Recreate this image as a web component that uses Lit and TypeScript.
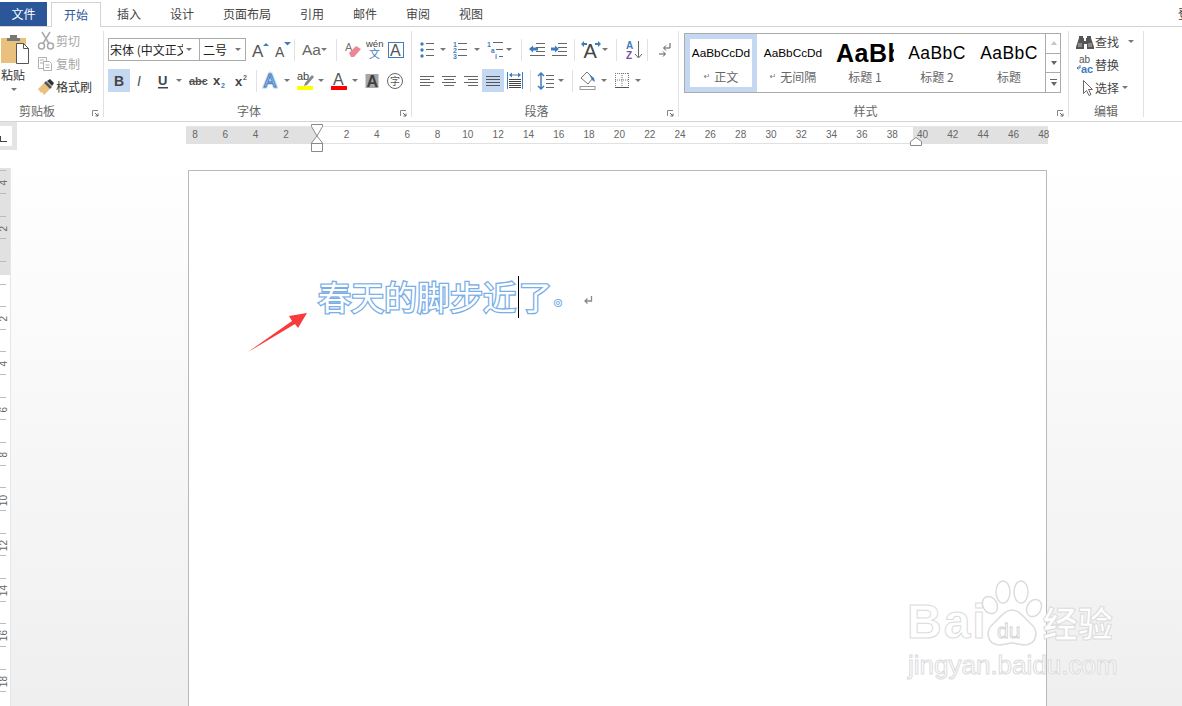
import { LitElement, html, css, svg } from "lit";
import { customElement } from "lit/decorators.js";

const G = "#666";
const BL = "#3f7cbf";
const ic = (c: unknown) => html`<svg width="22" height="22" viewBox="0 0 22 22">${c}</svg>`;
const ln = (rows: number[][], col = G) =>
  rows.map(([x1, y, x2]) => svg`<rect x=${x1} y=${y} width=${x2 - x1} height="1" fill=${col}/>`);
const T = (x: number, y: number, s: number, f: string, t: string, extra = "normal") =>
  svg`<text x=${x} y=${y} font-size=${s} fill=${f} font-weight=${extra}>${t}</text>`;

const icons: Record<string, unknown> = {
  grow: ic(svg`${T(4, 18, 17, "#555", "A")}<path d="M15 7l3-3 3 3z" fill=${BL}/>`),
  shrink: ic(svg`${T(4, 18, 14, "#555", "A")}<path d="M13 3h7l-3.500 3.500z" fill=${BL}/>`),
  aa: ic(svg`${T(3, 16, 15.500, "#666", "Aa")}`),
  eraser: ic(svg`${T(4, 12, 11, "#777", "A")}<path d="M8 14l7-7 5 3-7 8h-3z" fill="#ee8795"/>`),
  wen: ic(svg`${T(3, 8, 9.500, "#444", "wén")}${T(6, 19, 11, BL, "文")}`),
  boxA: ic(svg`<rect x="3.500" y="3.500" width="15" height="15" fill="#fff" stroke=${BL}/>${T(5, 17, 16, "#555", "A")}`),
  B: ic(svg`${T(6, 16, 14, "#444", "B", "bold")}`),
  I: ic(svg`<text x="7" y="16" font-size="14" fill="#555" font-style="italic" font-family="Liberation Serif">I</text>`),
  U: ic(svg`${T(6, 15, 13, "#444", "U", "bold")}<rect x="6" y="17" width="10" height="1.500" fill="#444"/>`),
  abc: ic(svg`${T(3, 15, 11, "#555", "abc", "bold")}<rect x="3" y="11" width="17" height="1" fill="#555"/>`),
  sub: ic(svg`${T(5, 15, 13, "#444", "x", "bold")}${T(13, 18, 7, BL, "2", "bold")}`),
  sup: ic(svg`${T(5, 16, 13, "#444", "x", "bold")}${T(13, 10, 7, "#666", "2", "bold")}`),
  fx: ic(svg`<text x="4" y="17" font-size="18" fill="#fff" stroke="#b9d4ef" stroke-width="3">A</text><text x="4" y="17" font-size="18" fill="#fff" stroke=${BL} stroke-width="1">A</text>`),
  hl: ic(svg`${T(3, 10, 11, "#444", "ab")}<path d="M11 13l7-8 2 2-7 8-3 1z" fill="#888"/><rect x="3" y="16" width="16" height="4" fill="#ff0"/>`),
  fc: ic(svg`${T(5, 15, 16, "#555", "A")}<rect x="3" y="16" width="16" height="4" fill="#f00"/>`),
  shA: ic(svg`<rect x="4.500" y="4" width="13" height="14" fill="#a6a6a6"/>${T(5.500, 17, 16, "#404040", "A", "bold")}`),
  zi: ic(svg`<circle cx="11" cy="11" r="7.500" fill="none" stroke="#666"/>${T(6, 15, 10, "#555", "字")}`),
  bul: ic(svg`<circle cx="6" cy="5" r="1.700" fill=${BL}/><circle cx="6" cy="11" r="1.700" fill=${BL}/><circle cx="6" cy="17" r="1.700" fill=${BL}/>${ln([[10, 4, 18], [10, 10, 18], [10, 16, 18]])}`),
  num: ic(svg`${T(4, 8, 7, BL, "1", "bold")}${T(4, 14, 7, BL, "2", "bold")}${T(4, 20, 7, BL, "3", "bold")}${ln([[9, 4, 18], [9, 10, 18], [9, 16, 18]])}`),
  multi: ic(svg`${T(3, 8, 7, BL, "1", "bold")}${T(7, 14, 6.500, BL, "a", "bold")}${T(11, 20, 7, BL, "i", "bold")}${ln([[9, 3, 19], [12, 10, 19], [15, 17, 19]])}`),
  out: ic(svg`${ln([[10, 4, 19], [10, 8, 19], [10, 12, 19], [4, 16, 19]])}<path d="M3 10l4-3.500v2h5v3h-5v2z" fill=${BL}/>`),
  ind: ic(svg`${ln([[10, 4, 19], [10, 8, 19], [10, 12, 19], [4, 16, 19]])}<path d="M11 10l-4-3.500v2h-4v3h4v2z" fill=${BL}/>`),
  cn: ic(svg`${T(3.500, 19, 20, "#444", "A")}<path d="M1 5l3-3v2h3v2h-3v2zM21 5l-3-3v2h-3v2h3v2z" fill=${BL}/>`),
  sort: ic(svg`${T(4, 10, 10, BL, "A", "bold")}${T(4, 20, 10, "#7a4fa3", "Z", "bold")}<path d="M16.500 2v16M13 15l3.500 4 3.500-4" fill="none" stroke="#666"/>`),
  show: ic(svg`<path d="M17 4v5h-6M13 6.500l-2.500 2.500 2.500 2.500" fill="none" stroke="#555"/><path d="M6 15h6M10 12.500l2.500 2.500-2.500 2.500" fill="none" stroke="#555"/>`),
  left: ic(svg`${ln([[4, 6, 18], [4, 9, 14], [4, 12, 18], [4, 15, 14]])}`),
  center: ic(svg`${ln([[4, 6, 18], [6, 9, 16], [4, 12, 18], [6, 15, 16]])}`),
  right: ic(svg`${ln([[4, 6, 18], [8, 9, 18], [4, 12, 18], [8, 15, 18]])}`),
  just: ic(svg`${ln([[4, 6, 18], [4, 9, 18], [4, 12, 18], [4, 15, 18]], "#555")}`),
  dist: ic(svg`<rect x="3" y="2" width="1" height="17" fill=${BL}/><rect x="18" y="2" width="1" height="17" fill=${BL}/><path d="M5 5l3-2.500v2h6v-2l3 2.500-3 2.500v-2h-6v2z" fill=${BL}/>${ln([[5, 9, 17], [5, 11, 17], [5, 13, 17], [5, 15, 17], [5, 17, 17]], "#444")}`),
  line: ic(svg`<path d="M6 3v16M3 6l3-3 3 3M3 16l3 3 3-3" fill="none" stroke=${BL} stroke-width="1.500"/>${ln([[11, 5, 19], [11, 9, 19], [11, 13, 19], [11, 17, 19]])}`),
  shade: ic(svg`<path d="M10 2l6 6-5 6-7-6z" fill="#fff" stroke="#777"/><path d="M12 4l5 4 1 4-3-2z" fill=${BL}/><rect x="3" y="16.500" width="15" height="3" fill="#fff" stroke="#999"/>`),
  border: ic(svg`<path d="M4.500 3v14M11 3v14M17.500 3v14M4 3.500h14M4 10h14" fill="none" stroke="#777" stroke-dasharray="1 1"/><rect x="4" y="17" width="14" height="1" fill="#555"/>`),
  launcher: html`<svg width="7" height="7" viewBox="0 0 7 7"><path d="M.5 6V.5H6" fill="none" stroke="#888"/><path d="M3 3l3 3M6 3.500V6H3.500" fill="none" stroke="#666"/></svg>`,
};

const paste = html`<svg width="30" height="34" viewBox="0 0 30 34"><path d="M1 6h25v25H1z" fill="#eac17c"/><path d="M7 6h13v3H7zM10 3h7v3h-7z" fill="#777"/><path d="M16.500 11.500h7l5 5v15h-12z" fill="#fff" stroke="#555"/><path d="M23.500 11.500v5h5" fill="none" stroke="#555"/></svg>`;
const cut = html`<svg width="18" height="20" viewBox="0 0 18 20"><g fill="none" stroke="#a9a9a9" stroke-width="1.500"><circle cx="4.500" cy="15" r="3"/><circle cx="13.500" cy="15" r="3"/><path d="M6 12.500L13 1M12 12.500L5 1"/></g></svg>`;
const copy = html`<svg width="18" height="18" viewBox="0 0 18 18"><g fill="#fff" stroke="#b0b0b0"><path d="M1.500 2.500h8v11h-8z"/><path d="M6.500 6.500h6l2 2v7h-8z"/></g><path d="M3 5h4M3 8h3M8.500 10h4M8.500 12.500h4" stroke="#b0b0b0"/></svg>`;
const brush = html`<svg width="18" height="18" viewBox="0 0 18 18"><path d="M1 11l6-6 6 6-6 6-2-3-1 1z" fill="#eac17c"/><path d="M7 5l2-2 6 6-2 2z" fill="#555"/><path d="M10 3l3-2 4 4-2 3z" fill="#333"/></svg>`;
const bino = html`<svg width="18" height="16" viewBox="0 0 18 16"><path d="M3 2h4v2h1v3h2V4h1V2h4v2l3 9v2h-7v-5H8v5H0v-2l3-9z" fill="#555"/><path d="M2 9h4v4H2zM12 9h4v4h-4z" fill="#888"/></svg>`;
const repl = html`<svg width="18" height="20" viewBox="0 0 18 20">${T(3, 8, 10, "#555", "ab")}${T(5, 18, 11, BL, "ac", "bold")}<path d="M4 10v3H1M2.500 11.500L1 13l1.500 1.500" fill="none" stroke=${BL}/></svg>`;
const cursor = html`<svg width="14" height="18" viewBox="0 0 14 18"><path d="M2.500 1.500v13l3-3 2.500 5 2-1-2.500-5h4z" fill="#fff" stroke="#666"/></svg>`;

const b = (k: string, c = "") => html`<span class="b ${c}">${icons[k]}</span>`;
const a = (c = "") => html`<span class="a ${c}"></span>`;
const sep = (c = "") => html`<span class="sep ${c}"></span>`;

const HNUMS = ["8", "6", "4", "2", "", ...Array.from({ length: 24 }, (_, i) => String((i + 1) * 2))];
const VNUMS = ["4", "2", "", "2", "4", "6", "8", "10", "12", "14", "16", "18"];

@customElement("app-root")
export class AppRoot extends LitElement {
  static styles = css`
    :host { display: block; width: 1182px; height: 706px; overflow: hidden; position: relative; background: #fff;
      font-family: "Noto Sans CJK SC", "Liberation Sans", sans-serif; font-size: 12px; color: #444; }
    svg text { font-family: "Liberation Sans", "Noto Sans CJK SC", sans-serif; }
    svg { display: block; flex: none; }
    .root { display: flex; flex-direction: column; height: 706px; }

    .tabs { display: flex; height: 27px; box-sizing: border-box; border-bottom: 1px solid #d4d4d4; padding-top: 2px; flex: none; }
    .tab { padding: 0 14.5px; line-height: 24px; white-space: nowrap; height: 24px; }
    .file { width: 47px; padding: 0; text-align: center; background: #2b579a; color: #fff; margin-right: 4px; }
    .on { padding: 0 12px; height: 25px; box-sizing: border-box; border: 1px solid #d4d4d4; border-bottom: 0; background: #fff; color: #2b579a; margin-right: 1.5px; line-height: 23px; }
    .login { margin-left: auto; margin-right: -8px; padding: 0; }

    .ribbon { display: flex; height: 95px; box-sizing: border-box; border-bottom: 1px solid #d4d4d4; padding-top: 4px; flex: none; }
    .g { box-sizing: border-box; height: 86px; border-right: 1px solid #e1e1e1; display: flex; flex-direction: column; flex: none; padding-top: 7px; }
    .g-clip { width: 104px; padding-top: 0; }
    .g-font { width: 308px; padding-left: 4px; }
    .g-para { width: 267px; padding-left: 4px; }
    .g-style { width: 390px; padding: 2px 0 0 5px; }
    .g-edit { width: 75px; padding: 0 0 0 7px; }
    .rows { display: flex; flex-direction: column; gap: 8px; }
    .row { display: flex; align-items: center; height: 23px; }
    .b { width: 22px; height: 23px; display: flex; align-items: center; justify-content: center; flex: none; }
    .sel { background: #c5d8f2; }
    .a { width: 10px; height: 23px; flex: none; display: flex; align-items: center; justify-content: center; }
    .a::after { content: ""; border: 3px solid transparent; border-top: 3px solid #777; border-bottom: 0; }
    .sep { width: 1px; height: 22px; background: #e1e1e1; flex: none; }
    .m1 { margin-left: 1px; } .m2 { margin-left: 2px; } .m3 { margin-left: 3px; } .m4 { margin-left: 4px; }
    .m5 { margin-left: 5px; } .m6 { margin-left: 6px; } .m7 { margin-left: 7px; } .n2 { margin-left: -2px; } .n1 { margin-left: -1px; }
    .combo { height: 23px; box-sizing: border-box; border: 1px solid #ababab; display: flex; align-items: center; flex: none; color: #222; overflow: hidden; }
    .c-font { width: 92px; }
    .c-size { width: 47px; margin-left: -1px; padding-left: 3px; }
    .combo .v { flex: 1; overflow: hidden; white-space: nowrap; min-width: 0; }
    .c-font .v { max-width: 73px; padding-left: 1px; }
    .combo .a { margin-right: 1px; width: 12px; }

    .lab { margin-top: auto; display: flex; height: 14px; line-height: 14px; margin-bottom: -1px; color: #666; flex: none; align-items: center; }
    .lab .t { flex: 1; text-align: center; }
    .lab .l { width: 16px; display: flex; justify-content: flex-end; padding-right: 4px; box-sizing: border-box; flex: none; margin-top: 4px; }
    .g-clip .lab .t { padding-right: 13px; }
    .g-font .lab .t, .g-para .lab .t { padding-right: 5px; }
    .g-style .lab { margin-left: -5px; }
    .g-edit .lab { margin-left: -7px; }

    .clip { display: flex; height: 72px; }
    .pcol { width: 37px; flex: none; display: flex; flex-direction: column; padding-top: 1px; }
    .pcol .p { line-height: 14px; margin: 2px 0 0 1px; color: #333; }
    .pcol .a { margin-left: 9px; height: 14px; }
    .ccol { display: flex; flex-direction: column; margin-top: -2px; }
    .ci { display: flex; align-items: center; height: 23px; gap: 1px; color: #333; white-space: nowrap; }
    .ci .i { width: 18px; height: 23px; display: flex; align-items: center; justify-content: center; flex: none; }
    .off { color: #a6a6a6; }

    .gal { display: flex; width: 377px; height: 60px; box-sizing: border-box; border: 1px solid #ababab; flex: none; }
    .cell { width: 72px; height: 58px; box-sizing: border-box; flex: none; display: flex; flex-direction: column; align-items: center; padding-top: 4px; }
    .cur { border: 5px solid #c5d8f2; padding-top: 0; }
    .smp { width: 60px; height: 30px; overflow: hidden; white-space: nowrap; color: #000; font-family: "Liberation Sans", sans-serif; display: flex; align-items: center; justify-content: center; flex: none; }
    .s1 { font-size: 11.800px; }
    .s2 { width: 58px; font-size: 25px; letter-spacing: .5px; font-weight: bold; justify-content: flex-start; }
    .s3 { font-size: 17.500px; letter-spacing: .4px; }
    .nm { line-height: 16px; margin-top: 1px; color: #666; white-space: nowrap; display: flex; align-items: center; gap: 4px; }
    .cur .nm { margin-top: 2px; }
    .ret { font-size: 8px; color: #777; font-family: "DejaVu Sans", sans-serif; }
    .cur .smp { height: 28px; }
    .scr { width: 15px; margin-left: auto; border-left: 1px solid #ababab; display: flex; flex-direction: column; flex: none; }
    .sb { flex: 1; display: flex; align-items: center; justify-content: center; flex-direction: column; gap: 2px; border-bottom: 1px solid #ababab; }
    .sb:last-child { border-bottom: 0; }
    .up { border: 3.500px solid transparent; border-bottom: 4px solid #c4c4c4; border-top: 0; }
    .dn { border: 3.500px solid transparent; border-top: 4px solid #666; border-bottom: 0; }
    .bar { width: 7px; height: 1px; background: #666; }

    .edit { display: flex; flex-direction: column; height: 69px; margin-top: -1px; flex: none; }
    .ei { display: flex; align-items: center; height: 23px; color: #444; white-space: nowrap; }
    .ei .i { width: 19px; display: flex; flex: none; }
    .ei .sh { padding-left: 5px; box-sizing: border-box; }
    .ei .x1 { margin-left: 7px; }
    .ei .x2 { margin-left: 1px; }

    .rl { height: 28px; flex: none; display: flex; background: #fff; }
    .corner { width: 17px; height: 28px; box-sizing: border-box; background: #fff; border: solid #e4e4e4; border-width: 4px 5px 4px 0; display: flex; align-items: flex-end; flex: none; padding-bottom: 4px; }
    .corner::before { content: ""; width: 7px; height: 6px; border: solid #444; border-width: 0 0 1px 1px; box-sizing: border-box; }
    .hr { position: relative; width: 862px; height: 18px; margin: 4px 0 0 169px; flex: none; box-sizing: border-box;
      background: linear-gradient(to right, #e1e1e1 132px, #fff 132px, #fff 727px, #e1e1e1 727px); border-bottom: 1px solid #e1e1e1; border-top: 1px solid #e6e6e6; }
    .hn { display: flex; margin-left: -6.150px; height: 16px; }
    .hn span { width: 30.320px; flex: none; text-align: center; font: 10px/16px "Liberation Sans", sans-serif; color: #666; }
    .mk { position: absolute; }
    .mk1 { left: 125px; top: -3px; }
    .mk2 { left: 724px; top: 10px; }

    .main { flex: 1; min-height: 0; display: flex; padding-top: 18px; overflow: hidden; background: linear-gradient(#fff 0%, #fdfdfd 15%, #efefef 100%); }
    .vr { width: 11px; flex: none; box-sizing: border-box; height: 540px; overflow: hidden; border-right: 1px solid #e6e6e6;
      background: repeating-linear-gradient(transparent 0 2.300px, #bbb 2.300px 3.300px, transparent 3.300px 22.650px) 0 0 / 6px 100% no-repeat,
        linear-gradient(#e1e1e1 107px, #fff 107px); }
    .vn { margin-top: -7.600px; display: flex; flex-direction: column; }
    .vn span { height: 45.300px; flex: none; display: flex; align-items: center; justify-content: center; width: 7px; }
    .vn b { font: 10px/10px "Liberation Sans", sans-serif; color: #666; writing-mode: vertical-rl; transform: rotate(180deg); }
    .page { position: relative; width: 859px; height: 560px; box-sizing: border-box; margin: 2px 0 0 177px; border: 1px solid #b9b9b9; background: #fff; padding: 105px 0 0 129px; flex: none; }
    .doc { display: flex; align-items: stretch; height: 42px; font-size: 33px; line-height: 42px; color: #fff; white-space: nowrap;
      -webkit-text-stroke: 2.700px #79aee6; paint-order: stroke fill; }
    .tx { margin-top: -1px; }
    .pd { width: 33px; flex: none; font-size: 20px; padding-left: 2px; box-sizing: border-box; -webkit-text-stroke: 2px #79aee6; }
    .caret { width: 1px; height: 42px; background: #000; margin: 0 0.500px 0 1.500px; flex: none; }
    .pil { margin: 20px 0 0 -2px; flex: none; }
    .arrow { position: absolute; left: 58px; top: 140px; }

    .wm { position: absolute; left: 900px; top: 575px; width: 225px; height: 112px; pointer-events: none; color: #fff; }
    .wm-top { display: flex; align-items: center; height: 75px; }
    .wm .bai { font: bold 48px/50px "Liberation Sans", sans-serif; letter-spacing: 2px; margin: 18px 0 0 7px; color: #fff; -webkit-text-stroke: 1px #dcdcdc; }
    .wm .jy { font: bold 35px/40px "Noto Sans CJK SC", sans-serif; color: #fff; -webkit-text-stroke: 1px #dcdcdc; margin: 18px 0 0 -5px; white-space: nowrap; }
    .wm .paw { margin: 0 0 0 -12px; }
    .wm .url { font: 26px/30px "Liberation Sans", sans-serif; color: #fff; -webkit-text-stroke: 1px #dcdcdc; margin: 0 0 0 8px; white-space: nowrap; }
  `;

  render() {
    const tabs = ["插入", "设计", "页面布局", "引用", "邮件", "审阅", "视图"];
    return html`<div class="root">
      <div class="tabs">
        <div class="tab file">文件</div>
        <div class="tab on">开始</div>
        ${tabs.map((t) => html`<div class="tab">${t}</div>`)}
        <div class="tab login">登</div>
      </div>

      <div class="ribbon">
        <div class="g g-clip">
          <div class="clip">
            <div class="pcol">${paste}<div class="p">粘贴</div>${a()}</div>
            <div class="ccol">
              <div class="ci off"><span class="i">${cut}</span>剪切</div>
              <div class="ci off"><span class="i">${copy}</span>复制</div>
              <div class="ci"><span class="i">${brush}</span>格式刷</div>
            </div>
          </div>
          <div class="lab"><span class="t">剪贴板</span><span class="l">${icons.launcher}</span></div>
        </div>

        <div class="g g-font">
          <div class="rows">
            <div class="row">
              <div class="combo c-font"><span class="v">宋体 (中文正文)</span>${a()}</div>
              <div class="combo c-size"><span class="v">二号</span>${a()}</div>
              ${b("grow", "m2")}${b("shrink", "m1")}${sep("m1")}${b("aa", "m4")}${a("n2")}${sep("m7")}
              ${b("eraser", "m4")}${b("wen")}${b("boxA")}
            </div>
            <div class="row">
              ${b("B", "sel")}${b("I")}${b("U")}${a()}${b("abc", "m2")}${b("sub")}${b("sup")}${sep("m4")}
              ${b("fx", "m3")}${a()}${b("hl", "m2")}${a()}${b("fc", "m2")}${a()}${b("shA", "m1")}${b("zi", "m1")}
            </div>
          </div>
          <div class="lab"><span class="t">字体</span><span class="l">${icons.launcher}</span></div>
        </div>

        <div class="g g-para">
          <div class="rows">
            <div class="row">
              ${b("bul")}${a()}${b("num", "m1")}${a("m1")}${b("multi", "m2")}${a("n2")}${sep("m7")}
              ${b("out", "m4")}${b("ind")}${sep("m4")}${b("cn", "m5")}${a("n2")}${sep("m6")}${b("sort", "m5")}${sep("m3")}${b("show", "m5")}
            </div>
            <div class="row">
              ${b("left")}${b("center")}${b("right")}${b("just", "sel")}${b("dist")}${sep("m4")}
              ${b("line", "m4")}${a("n1")}${sep("m6")}${b("shade", "m4")}${a()}${b("border", "m2")}${a()}
            </div>
          </div>
          <div class="lab"><span class="t">段落</span><span class="l">${icons.launcher}</span></div>
        </div>

        <div class="g g-style">
          <div class="gal">
            <div class="cell cur"><div class="smp s1">AaBbCcDd</div><div class="nm"><span class="ret">↵</span>正文</div></div>
            <div class="cell"><div class="smp s1">AaBbCcDd</div><div class="nm"><span class="ret">↵</span>无间隔</div></div>
            <div class="cell"><div class="smp s2">AaBb</div><div class="nm">标题 1</div></div>
            <div class="cell"><div class="smp s3">AaBbC</div><div class="nm">标题 2</div></div>
            <div class="cell"><div class="smp s3">AaBbC</div><div class="nm">标题</div></div>
            <div class="scr">
              <div class="sb"><span class="up"></span></div>
              <div class="sb"><span class="dn"></span></div>
              <div class="sb"><span class="bar"></span><span class="dn"></span></div>
            </div>
          </div>
          <div class="lab"><span class="t">样式</span><span class="l">${icons.launcher}</span></div>
        </div>

        <div class="g g-edit">
          <div class="edit">
            <div class="ei"><span class="i">${bino}</span>查找<span class="a x1"></span></div>
            <div class="ei"><span class="i">${repl}</span>替换</div>
            <div class="ei"><span class="i sh">${cursor}</span>选择<span class="a x2"></span></div>
          </div>
          <div class="lab"><span class="t">编辑</span></div>
        </div>
      </div>

      <div class="rl">
        <div class="corner"></div>
        <div class="hr">
          <div class="hn">${HNUMS.map((n) => html`<span>${n}</span>`)}</div>
          <svg class="mk mk1" width="12" height="29" viewBox="0 0 12 29"><path d="M.5.5h11v2L6 12 .5 2.500z" fill="#fff" stroke="#8a8a8a"/><path d="M6 12l5.500 7v8.500H.5V19z" fill="#fff" stroke="#8a8a8a"/><path d="M.5 19.500h11" stroke="#8a8a8a"/></svg>
          <svg class="mk mk2" width="12" height="9" viewBox="0 0 12 9"><path d="M.5 8.500V4.500L6 .5l5.500 4v4z" fill="#fff" stroke="#8a8a8a"/></svg>
        </div>
      </div>

      <div class="main">
        <div class="vr"><div class="vn">${VNUMS.map((n) => html`<span><b>${n}</b></span>`)}</div></div>
        <div class="page">
          <div class="doc"><span class="tx">春天的脚步近</span><span class="caret"></span><span class="tx">了</span><span class="pd">。</span>
            <svg class="pil" width="10" height="9" viewBox="0 0 10 9"><path d="M8.500 0v5H2M4.500 2.500L2 5l2.500 2.500" fill="none" stroke="#8a8a8a" stroke-width="1.300"/></svg>
          </div>
          <svg class="arrow" width="62" height="42" viewBox="0 0 62 42"><path d="M1 41L45 10l-3-5 18-3-9 15-3-4z" fill="#f83b3b"/></svg>
        </div>
      </div>
    </div>

    <div class="wm">
      <div class="wm-top">
        <span class="bai">Bai</span>
        <svg class="paw" width="72" height="75" viewBox="0 0 72 75">
          <g fill="#fff" stroke="#dcdcdc" stroke-width="1.500">
            <ellipse cx="14" cy="30" rx="7" ry="9" transform="rotate(-30 14 30)"/>
            <ellipse cx="27" cy="17" rx="7" ry="11"/>
            <ellipse cx="45" cy="17" rx="7" ry="11"/>
            <ellipse cx="58" cy="33" rx="7" ry="9" transform="rotate(30 58 33)"/>
            <path d="M36 35c8 0 12 8 19 14 8 7 6 20-6 21-5 0-9-2-13-2s-8 2-13 2c-12-1-14-14-6-21 7-6 11-14 19-14z"/>
          </g>
          <text x="21" y="63" font-size="21" fill="#fff" stroke="#cfcfcf" stroke-width=".8">du</text>
        </svg>
        <span class="jy">经验</span>
      </div>
      <div class="url">jingyan.baidu.com</div>
    </div>`;
  }
}
